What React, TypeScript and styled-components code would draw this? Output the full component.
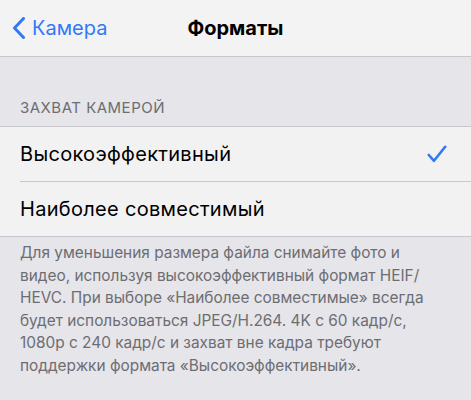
import styled, { createGlobalStyle } from "styled-components";

const GlobalStyle = createGlobalStyle`
  html, body {
    margin: 0;
    padding: 0;
    background: #e5e5ea;
  }
  body {
    font-family: Inter, "Liberation Sans", sans-serif;
    -webkit-font-smoothing: antialiased;
  }
`;

const Screen = styled("div")`
  width: 471px;
  height: 400px;
  background: #e5e5ea;
  overflow: hidden;
`;

const NavBar = styled("div")`
  height: 56px;
  background: #f3f3f3;
  border-bottom: 1px solid #c8c8cc;
  display: grid;
  grid-template-columns: 1fr auto 1fr;
  align-items: center;
`;

const BackButton = styled("div")`
  display: flex;
  align-items: center;
  gap: 6px;
  padding-left: 12px;
  color: #3478f6;
  font-size: 20px;
`;

const Title = styled("div")`
  font-size: 20px;
  font-weight: 700;
  color: #000;
`;

const SectionHeader = styled("div")`
  padding: 42px 20px 9px;
  font-size: 15px;
  line-height: 18px;
  letter-spacing: 0.5px;
  color: #6d6d72;
  text-transform: uppercase;
`;

const Group = styled("div")`
  background: #f2f2f3;
  border-top: 1px solid #c8c8cc;
  border-bottom: 1px solid #c8c8cc;
`;

const Cell = styled("div")<{ $last?: boolean }>`
  height: 54px;
  margin-left: 20px;
  padding-right: 24px;
  display: flex;
  align-items: center;
  justify-content: space-between;
  font-size: 20px;
  letter-spacing: 0.3px;
  color: #000;
  border-bottom: ${(p) => (p.$last ? "none" : "1px solid #c8c8cc")};
`;

const Footer = styled("div")`
  padding: 5px 20px 0;
  font-size: 15.4px;
  line-height: 22.5px;
  color: #6d6d72;
`;

const Chevron = () => (
  <svg width="14" height="22" viewBox="0 0 14 22">
    <path d="M11.5 1.5 L2.5 11 L11.5 20.5" fill="none" stroke="#3478f6" strokeWidth="3" strokeLinecap="round" strokeLinejoin="round" />
  </svg>
);

const Check = () => (
  <svg width="20" height="18" viewBox="0 0 20 18">
    <path d="M1.8 10 L7 15.8 L18.2 1.8" fill="none" stroke="#3478f6" strokeWidth="2.6" strokeLinecap="round" strokeLinejoin="round" />
  </svg>
);

const App = () => {
  return (
    <Screen>
      <GlobalStyle />
      <NavBar>
        <BackButton>
          <Chevron />
          Камера
        </BackButton>
        <Title>Форматы</Title>
        <div />
      </NavBar>

      <SectionHeader>Захват камерой</SectionHeader>
      <Group>
        <Cell>
          Высокоэффективный
          <Check />
        </Cell>
        <Cell $last>Наиболее совместимый</Cell>
      </Group>

      <Footer>
        Для уменьшения размера файла снимайте фото и
        <br />
        видео, используя высокоэффективный формат HEIF/
        <br />
        HEVC. При выборе «Наиболее совместимые» всегда
        <br />
        будет использоваться JPEG/H.264. 4K с 60 кадр/с,
        <br />
        1080p с 240 кадр/с и захват вне кадра требуют
        <br />
        поддержки формата «Высокоэффективный».
      </Footer>
    </Screen>
  );
};

export default App;
